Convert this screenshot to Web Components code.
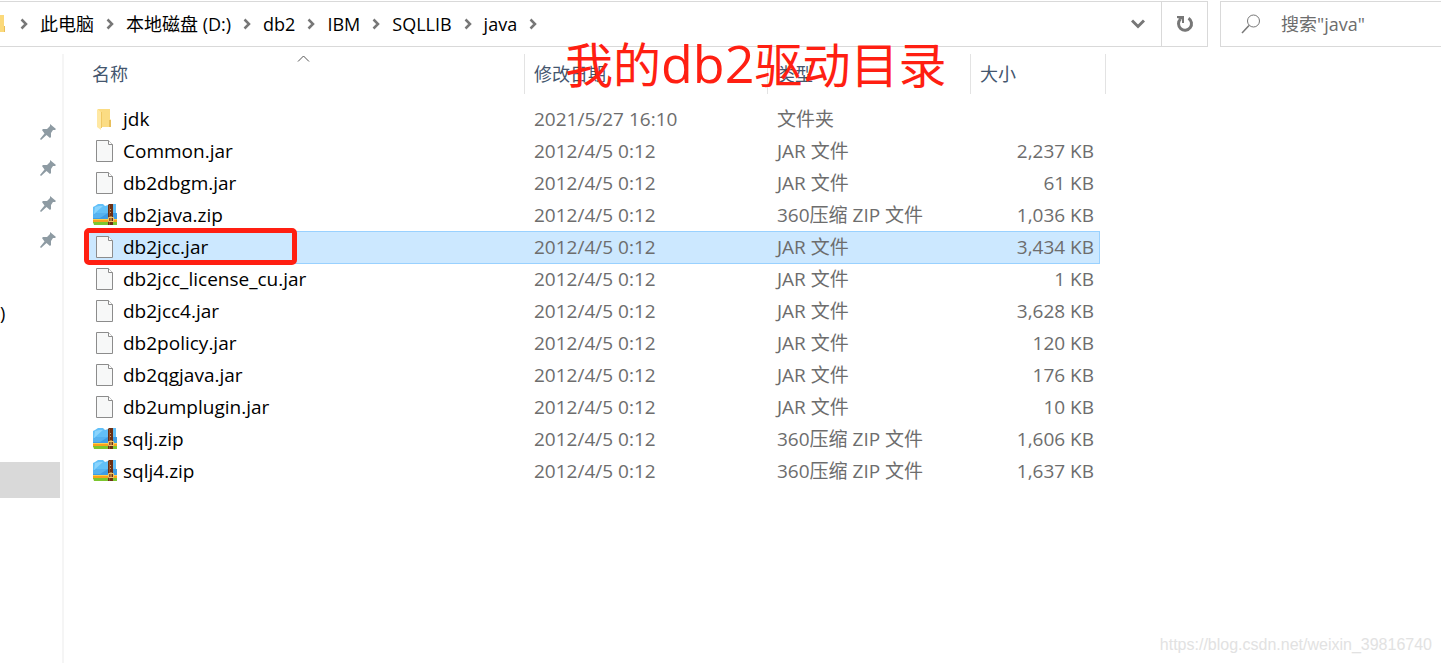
<!DOCTYPE html>
<html lang="zh-CN">
<head>
<meta charset="utf-8">
<title>java</title>
<style>
  body {
    margin: 0;
    background: #fff;
    color: #000;
    font-family: "Open Sans", "Noto Sans CJK SC", sans-serif;
    font-size: 18px;
    line-height: 24px;
  }
</style>
</head>
<body>
<explorer-window>
  <address-bar slot="toolbar" path="此电脑|本地磁盘 (D:)|db2|IBM|SQLLIB|java"></address-bar>
  <search-box slot="toolbar" label='搜索"java"'></search-box>
  <nav-pane slot="side"></nav-pane>
  <file-table></file-table>
  <red-note>我的<big>db2</big>驱动目录</red-note>
  <page-mark slot="mark">https://blog.csdn.net/weixin_39816740</page-mark>
</explorer-window>

<script>
const JAR = "JAR 文件";
const ZIP = "360压缩 ZIP 文件";
const OLD = "2012/4/5 0:12";

const files = [
  ["folder", "jdk", "2021/5/27 16:10", "文件夹", ""],
  ["page", "Common.jar", OLD, JAR, "2,237 KB"],
  ["page", "db2dbgm.jar", OLD, JAR, "61 KB"],
  ["zip", "db2java.zip", OLD, ZIP, "1,036 KB"],
  ["page", "db2jcc.jar", OLD, JAR, "3,434 KB"],
  ["page", "db2jcc_license_cu.jar", OLD, JAR, "1 KB"],
  ["page", "db2jcc4.jar", OLD, JAR, "3,628 KB"],
  ["page", "db2policy.jar", OLD, JAR, "120 KB"],
  ["page", "db2qgjava.jar", OLD, JAR, "176 KB"],
  ["page", "db2umplugin.jar", OLD, JAR, "10 KB"],
  ["zip", "sqlj.zip", OLD, ZIP, "1,606 KB"],
  ["zip", "sqlj4.zip", OLD, ZIP, "1,637 KB"],
];
const selected = "db2jcc.jar";

const icons = {
  folder: `<path fill="#fbdc83" d="M5 2h12v10l1 1v7H7z"/>
    <path fill="#e8bf5c" d="M16 13h2v7h-2z"/>
    <path fill="#f0c863" d="M8 5h1v16H8z"/>
    <path fill="#ffe8a3" d="M4 2l4 3v18l-4-3z"/>`,
  page: `<path fill="#f7f8f8" stroke="#8c8c8c" d="M3.500 1.500h12l4 4v17h-16z"/>
    <path fill="#fff" stroke="#8c8c8c" d="M15.500 1.500v4h4"/>`,
  zip: `<path fill="#62c0f8" d="M0 4l2-1 3-2h5l2 2 6-2h5v13H0z"/>
    <path fill="#8ad4fd" d="M2 4l4-1h4l-9 8z"/>
    <path fill="#3d9de6" d="M0 12l4-2h20v7H0z"/>
    <path fill="#56b2f0" d="M0 12l4-2h11l-8 5H0z"/>
    <path fill="#f9a21b" d="M0 16h24v4H0z"/>
    <path fill="#ffcf4e" d="M0 16h24v1H0z"/>
    <path fill="#7cc62f" d="M0 19h24v3H1z"/>
    <path fill="#6b3015" d="M15 2l1-1h4v21h-5z"/>
    <path fill="#96522b" d="M16 2h1v20h-1z"/>
    <path fill="none" stroke="#f0c467" d="M15.500 14.500h5v4h-5zM18 13v6"/>
    <path fill="#caa06a" d="M17 6h1v1h-1zM17 9h1v1h-1z"/>`,
};

class ExplorerWindow extends HTMLElement {
  constructor() {
    super();
    this.attachShadow({ mode: "open" });
    this.shadowRoot.innerHTML = `<style>
        :host {
          display: flex;
          flex-direction: column;
          position: relative;
          height: 100vh;
          overflow: hidden;
        }
        header {
          display: flex;
          gap: 12px;
          padding: 1px 0 7px;
        }
        main {
          display: flex;
          flex: 1;
          min-height: 0;
        }
        .content {
          position: relative;
          flex: 1;
          padding-left: 22px;
        }
      </style>
      <header><slot name="toolbar"></slot></header>
      <main>
        <slot name="side"></slot>
        <div class="content"><slot></slot></div>
      </main>
      <slot name="mark"></slot>`;
  }
}

class AddressBar extends HTMLElement {
  connectedCallback() {
    const chevron = `<svg width="8" height="12" viewBox="0 0 8 12" aria-hidden="true">
        <path d="M1.500 1.500L6 6l-4.500 4.500" fill="none" stroke="#777" stroke-width="2.500"/>
      </svg>`;
    const parts = this.getAttribute("path").split("|");
    this.attachShadow({ mode: "open" });
    this.shadowRoot.innerHTML = `<style>
        :host {
          display: flex;
          flex: 1;
          box-sizing: border-box;
          height: 46px;
          border: 1px solid #d9d9d9;
          border-left: 0;
        }
        nav {
          display: flex;
          flex: 1;
          align-items: center;
          gap: 12px;
        }
        .root {
          width: 8px;
          height: 20px;
        }
        a {
          color: inherit;
          text-decoration: none;
        }
        button {
          display: grid;
          place-items: center;
          width: 46px;
          padding: 0;
          border: 0;
          background: none;
        }
        .refresh {
          border-left: 1px solid #d9d9d9;
        }
      </style>
      <nav aria-label="路径">
        <svg class="root" viewBox="0 0 8 20" aria-hidden="true">
          <path fill="#fbd97a" d="M0 1h4v17H0z"/>
          <path fill="#e9bd58" d="M4 12h1v6H4z"/>
        </svg>
        ${chevron}
        ${parts.map((part) => `<a href="#">${part}</a>${chevron}`).join("")}
      </nav>
      <button aria-label="历史记录">
        <svg width="14" height="10" viewBox="0 0 14 10">
          <path d="M1 1.500l6 6 6-6" fill="none" stroke="#777" stroke-width="3"/>
        </svg>
      </button>
      <button class="refresh" aria-label="刷新">
        <svg width="18" height="18" viewBox="0 0 18 18">
          <path d="M12.500 3.200A6.500 6.500 0 1 1 4.500 4" fill="none" stroke="#777" stroke-width="3"/>
          <path d="M1 1h7v7H6V4.500L1 3z" fill="#777"/>
        </svg>
      </button>`;
  }
}

class SearchBox extends HTMLElement {
  connectedCallback() {
    this.attachShadow({ mode: "open" });
    this.shadowRoot.innerHTML = `<style>
        :host {
          display: flex;
          align-items: center;
          gap: 20px;
          box-sizing: border-box;
          width: 221px;
          height: 46px;
          padding-left: 20px;
          border: 1px solid #d9d9d9;
          border-right: 0;
        }
        input {
          flex: 1;
          min-width: 0;
          padding: 0;
          border: 0;
          outline: 0;
          background: none;
          font: inherit;
        }
        input::placeholder {
          color: #6d6d6d;
          opacity: 1;
        }
      </style>
      <svg width="20" height="20" viewBox="0 0 20 20" fill="none" stroke="#777" aria-hidden="true">
        <circle cx="12.500" cy="7" r="6"/>
        <path d="M8 11.500L1 19" stroke-width="1.500"/>
      </svg>
      <input type="search">`;
    const input = this.shadowRoot.querySelector("input");
    input.placeholder = this.getAttribute("label");
    input.setAttribute("aria-label", this.getAttribute("label"));
  }
}

class NavPane extends HTMLElement {
  constructor() {
    super();
    const pin = `<li><svg width="16" height="16" viewBox="0 0 16 16" aria-hidden="true">
        <path fill="#8e9ba3" d="M10 0l6 5-1 1-2 0-2 3 0 4-1 1-3.500-3L1 16l-1-1 4.500-5.500L2 6l1-1 4 0 3-3z"/>
      </svg></li>`;
    this.attachShadow({ mode: "open" });
    this.shadowRoot.innerHTML = `<style>
        :host {
          display: block;
          width: 62px;
          border-right: 2px solid #f5f5f5;
        }
        ul {
          margin: 0;
          padding: 60px 0 37px;
          list-style: none;
        }
        li {
          display: flex;
          align-items: center;
          justify-content: flex-end;
          height: 36px;
          padding-right: 6px;
        }
        .drive, .current {
          height: 36px;
          line-height: 36px;
        }
        .current {
          width: 60px;
          margin-top: 131px;
          background: #d9d9d9;
        }
      </style>
      <ul>${pin.repeat(4)}</ul>
      <div class="drive">)</div>
      <div class="current"></div>`;
  }
}

class FileIcon extends HTMLElement {
  connectedCallback() {
    this.attachShadow({ mode: "open" });
    this.shadowRoot.innerHTML = `<style>
        :host, svg {
          display: block;
          width: 24px;
          height: 24px;
        }
      </style>
      <svg viewBox="0 0 24 24" aria-hidden="true">${icons[this.getAttribute("kind")]}</svg>`;
  }
}

class FileTable extends HTMLElement {
  constructor() {
    super();
    this.attachShadow({ mode: "open" });
    this.shadowRoot.innerHTML = `<style>
        :host {
          display: block;
        }
        table {
          width: 1020px;
          table-layout: fixed;
          border-collapse: separate;
          border-spacing: 0;
        }
        .date { width: 243px; }
        .type { width: 203px; }
        .size { width: 129px; }
        .edge { width: 6px; }
        th {
          padding: 0 0 9px;
          font-weight: 400;
        }
        th button {
          position: relative;
          display: block;
          width: 100%;
          height: 40px;
          padding: 0 9px;
          border: 0;
          border-right: 1px solid #e3e3e3;
          background: none;
          color: #44566e;
          font: inherit;
          text-align: left;
        }
        th:first-child button {
          padding-left: 6px;
        }
        .sort {
          position: absolute;
          top: 1px;
          left: 50%;
          margin-left: -8px;
        }
        td {
          position: relative;
          height: 32px;
          padding: 0 9px;
          color: #6d6d6d;
          font-size: 19px;
          white-space: nowrap;
        }
        td:first-child {
          padding-left: 7px;
          color: #000;
        }
        td:nth-child(4) {
          padding-right: 6px;
          text-align: right;
        }
        td:last-child {
          padding: 0;
        }
        .name {
          display: flex;
          align-items: center;
          gap: 6px;
        }
        .selected td:not(:last-child) {
          background: #cce8ff;
          box-shadow: inset 0 1px #99d1ff, 0 1px #99d1ff;
        }
        .selected td:nth-child(4) {
          box-shadow: inset 0 1px #99d1ff, 0 1px #99d1ff, inset -1px 0 #99d1ff;
        }
        .frame {
          position: absolute;
          top: -3px;
          left: -2px;
          z-index: 1;
          box-sizing: border-box;
          width: 213px;
          height: 37px;
          border: 5px solid #ff1f12;
          border-radius: 5px;
        }
      </style>
      <table>
        <colgroup>
          <col><col class="date"><col class="type"><col class="size"><col class="edge">
        </colgroup>
        <thead>
          <tr>
            <th aria-sort="ascending"><button>名称<svg class="sort" width="13" height="7" viewBox="0 0 13 7" aria-hidden="true">
              <path d="M1 6.500L6.500 1 12 6.500" fill="none" stroke="#555"/>
            </svg></button></th>
            <th><button>修改日期</button></th>
            <th><button>类型</button></th>
            <th colspan="2"><button>大小</button></th>
          </tr>
        </thead>
        <tbody>
          ${files
            .map(([icon, name, date, type, size]) => {
              const on = name === selected;
              return `<tr${on ? ' class="selected"' : ""}>
            <td><div class="name"><file-icon kind="${icon}"></file-icon>${name}</div>${on ? '<div class="frame"></div>' : ""}</td>
            <td>${date}</td>
            <td>${type}</td>
            <td>${size}</td>
            <td></td>
          </tr>`;
            })
            .join("")}
        </tbody>
      </table>`;
  }
}

class RedNote extends HTMLElement {
  constructor() {
    super();
    this.attachShadow({ mode: "open" });
    this.shadowRoot.innerHTML = `<style>
        :host {
          position: absolute;
          top: -23px;
          left: 501px;
          color: #ff1f12;
          font-size: 48px;
          line-height: 64px;
          white-space: nowrap;
        }
        ::slotted(big) {
          font-size: 52px;
        }
      </style>
      <slot></slot>`;
  }
}

class PageMark extends HTMLElement {
  constructor() {
    super();
    this.attachShadow({ mode: "open" });
    this.shadowRoot.innerHTML = `<style>
        :host {
          position: absolute;
          right: 9px;
          bottom: 6px;
          color: #e2e2e2;
          font: 16px/24px "Liberation Sans", sans-serif;
        }
      </style>
      <slot></slot>`;
  }
}

customElements.define("explorer-window", ExplorerWindow);
customElements.define("address-bar", AddressBar);
customElements.define("search-box", SearchBox);
customElements.define("nav-pane", NavPane);
customElements.define("file-icon", FileIcon);
customElements.define("file-table", FileTable);
customElements.define("red-note", RedNote);
customElements.define("page-mark", PageMark);
</script>
</body>
</html>
